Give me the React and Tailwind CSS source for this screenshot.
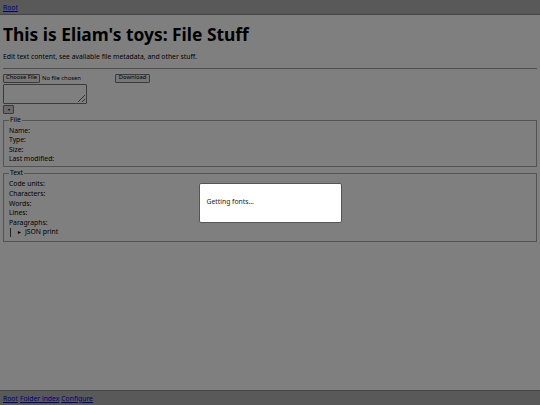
import { useState } from "react"

const font = { fontFamily: '"Noto Sans", "Open Sans", sans-serif' }

function Row({ label, tall }) {
  return <div className={tall ? "leading-[9.8px] h-[9.8px]" : "leading-[9.3px] h-[9.3px]"}>{label}</div>
}

export default function App() {
  const [text, setText] = useState("")

  return (
    <div className="relative min-h-screen flex flex-col bg-white text-black text-[6.8px]" style={font}>
      <header className="h-[15px] bg-[#b2b2b2] border-b border-[#8a8a8a] px-[3px] pt-[3px]">
        <a href="#" className="text-[#0000ee] underline">Root</a>
      </header>

      <main className="flex-1 px-[3px]">
        <h1 className="text-[17.4px] font-bold leading-none mt-[11px] mb-[11px]">
          This is Eliam's toys: File Stuff
        </h1>
        <p className="leading-none mb-[7px]">Edit text content, see available file metadata, and other stuff.</p>
        <hr className="border-t border-[#9a9a9a] mb-[4px]" />

        <div className="flex items-center h-[10px]">
          <button className="h-[9px] px-[2px] text-[5.8px] leading-none bg-[#efefef] border border-[#767676] rounded-[1px]">
            Choose File
          </button>
          <span className="ml-[2px] text-[5.8px]">No file chosen</span>
          <button className="ml-[34px] h-[9px] px-[3px] text-[5.8px] leading-none bg-[#efefef] border border-[#767676] rounded-[1px]">
            Download
          </button>
        </div>
        <textarea
          value={text}
          onChange={(e) => setText(e.target.value)}
          className="block mt-[1px] w-[84px] h-[20px] border border-[#767676] rounded-[1px] bg-white"
        />
        <button className="block mt-[1px] w-[11px] h-[9px] text-[4px] leading-none bg-[#d6d6d6] border border-[#767676] rounded-[1px]">
          ▾
        </button>

        <fieldset className="mt-[3px] border border-[#a8a8a8] px-[5px] pb-[3px] pt-[2px]">
          <legend className="px-[1px] leading-none">File</legend>
          <Row label="Name:" />
          <Row label="Type:" />
          <Row label="Size:" />
          <Row label="Last modified:" />
        </fieldset>

        <fieldset className="mt-[3px] border border-[#a8a8a8] px-[5px] pb-[4px] pt-[2px]">
          <legend className="px-[1px] leading-none">Text</legend>
          <Row tall label="Code units:" />
          <Row tall label="Characters:" />
          <Row tall label="Words:" />
          <Row tall label="Lines:" />
          <Row tall label="Paragraphs:" />
          <div className="flex items-center border-l border-[#444] ml-[1px] pl-[6px] h-[9px]">
            <span className="text-[5px] mr-[3px]">►</span>
            <span>JSON print</span>
          </div>
        </fieldset>
      </main>

      <footer className="h-[15px] bg-[#b2b2b2] border-t border-[#8a8a8a] px-[3px] pt-[3px] flex gap-[2px]">
        <a href="#" className="text-[#0000ee] underline">Root</a>
        <a href="#" className="text-[#0000ee] underline">Folder index</a>
        <a href="#" className="text-[#0000ee] underline">Configure</a>
      </footer>

      <div className="fixed inset-0 bg-black/50 flex items-center justify-center">
        <div className="w-[143px] h-[40px] bg-white border border-[#555] rounded-[2px] flex items-center px-[7px]">
          <span className="text-[6.8px] text-[#222]">Getting fonts...</span>
        </div>
      </div>
    </div>
  )
}
